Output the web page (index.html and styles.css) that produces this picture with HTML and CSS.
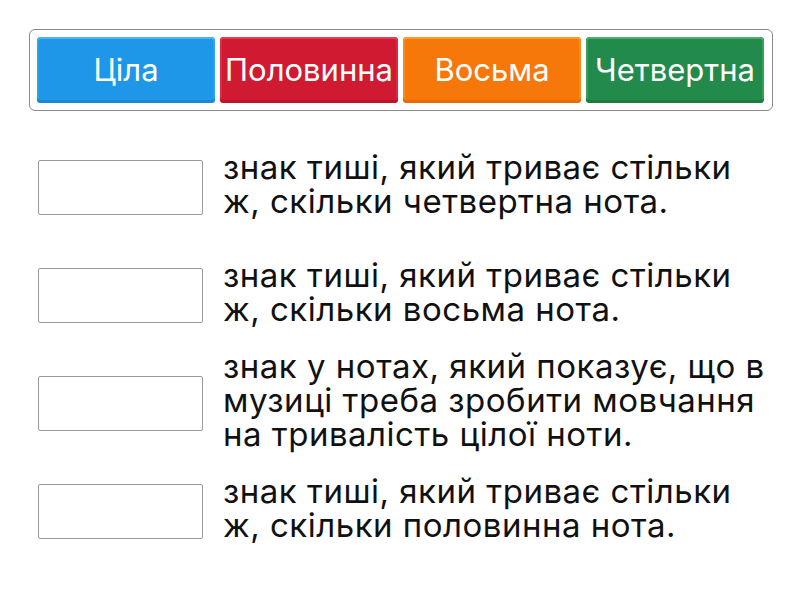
FILE: index.html
```html
<!DOCTYPE html>
<html lang="uk">
<head>
  <meta charset="UTF-8" />
  <meta name="viewport" content="width=device-width, initial-scale=1" />
  <title>Знаки тиші</title>
  <link rel="stylesheet" href="styles.css">
</head>
<body>
  <div class="bank">
    <div class="card blue">Ціла</div>
    <div class="card red">Половинна</div>
    <div class="card orange">Восьма</div>
    <div class="card green">Четвертна</div>
  </div>

  <div class="rows">
    <div class="row">
      <div class="slot"></div>
      <div class="text">знак тиші, який триває стільки ж, скільки четвертна нота.</div>
    </div>
    <div class="row">
      <div class="slot"></div>
      <div class="text">знак тиші, який триває стільки ж, скільки восьма нота.</div>
    </div>
    <div class="row">
      <div class="slot"></div>
      <div class="text">знак у нотах, який показує, що в музиці треба зробити мовчання на тривалість цілої ноти.</div>
    </div>
    <div class="row">
      <div class="slot"></div>
      <div class="text">знак тиші, який триває стільки ж, скільки половинна нота.</div>
    </div>
  </div>
</body>
</html>
```

FILE: styles.css
```css
body { margin:0; padding:29px; background:#fff; font-family: Inter, "Noto Sans", sans-serif; color:#111; }

.bank {
  display: flex;
  gap: 5px;
  width: 728px;
  padding: 7px;
  border: 1px solid #8a8a8a;
  border-radius: 6px;
}
.card {
  width: 178px;
  height: 66px;
  display: flex;
  align-items: center;
  justify-content: center;
  border-radius: 4px;
  color: #fff;
  font-size: 31px;
  padding-bottom: 2px;
  box-sizing: border-box;
  white-space: nowrap;
}
.blue   { background:#1f97e8; box-shadow: inset 0 2px 0 #46b6f7, inset 0 -3px 0 #1a86d6, inset 2px 0 0 #2aa4f0, inset -2px 0 0 #2aa4f0; }
.red    { background:#d01a32; box-shadow: inset 0 2px 0 #ea3d52, inset 0 -3px 0 #bb142a, inset 2px 0 0 #dc2a40, inset -2px 0 0 #dc2a40; }
.orange { background:#f6770a; box-shadow: inset 0 2px 0 #fd9a2a, inset 0 -3px 0 #e86b05, inset 2px 0 0 #fb8a1c, inset -2px 0 0 #fb8a1c; }
.green  { background:#228a4b; box-shadow: inset 0 2px 0 #46b06e, inset 0 -3px 0 #1c7b41, inset 2px 0 0 #35a05e, inset -2px 0 0 #35a05e; }

.rows { margin-top: 22px; }
.row {
  display: flex;
  align-items: center;
  gap: 20px;
  height: 108px;
  padding-left: 9px;
}
.slot {
  flex: none;
  width: 165px;
  height: 55px;
  box-sizing: border-box;
  border: 1px solid #9a9a9a;
  border-radius: 2px;
  background: #fff;
}
.text {
  width: 546px;
  font-size: 33px;
  line-height: 34px;
  letter-spacing: 0.5px;
  padding-bottom: 6px;
}
```
